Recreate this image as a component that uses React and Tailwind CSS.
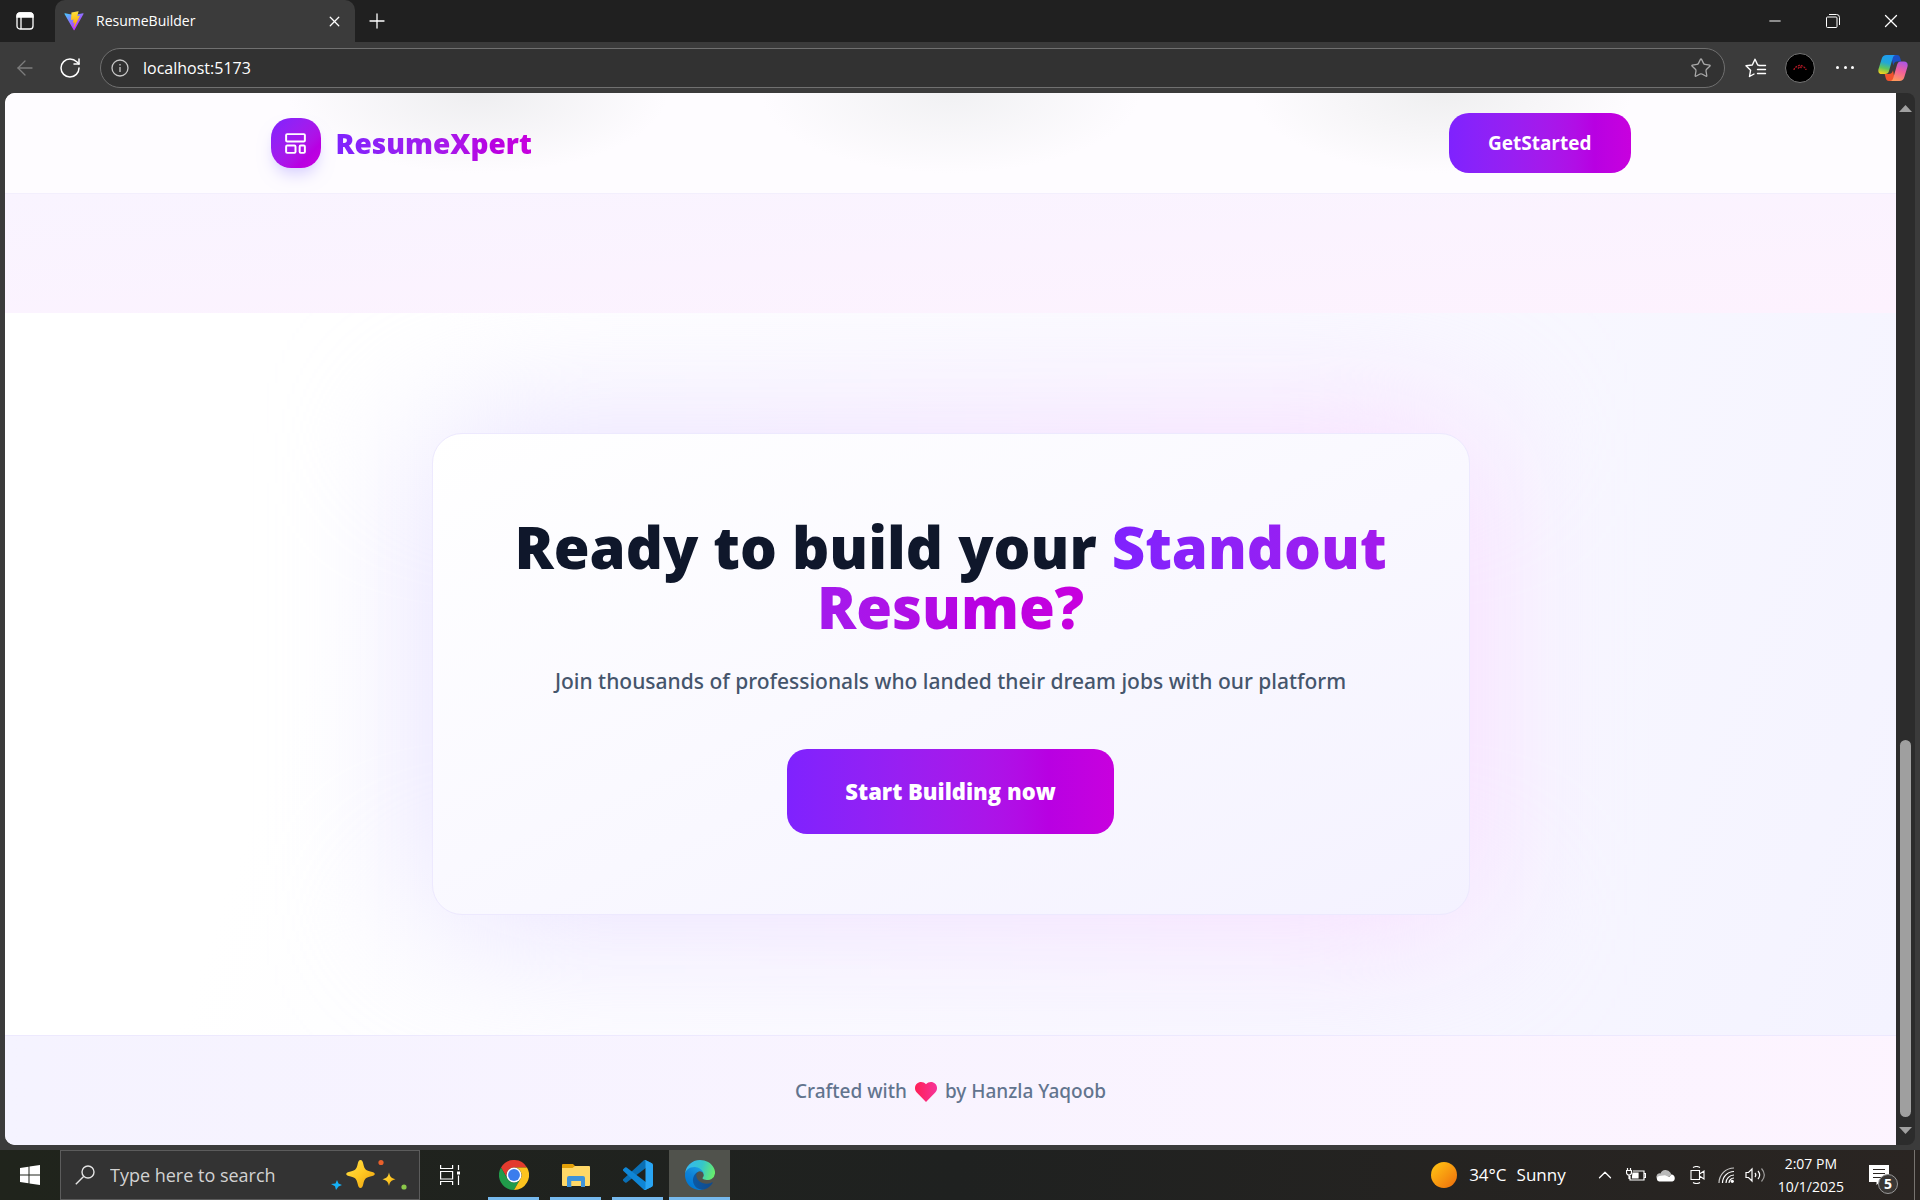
import {
  ArrowLeft, LayoutTemplate, Minus, Plus, RotateCw, Star, X, ChevronUp,
} from "lucide-react";

const brandGradient =
  "bg-linear-to-r from-[#7f22fe] via-[#b800e2] via-80% to-[#c800de]";

function ViteLogo() {
  return (
    <svg viewBox="0 0 410 404" className="size-5 shrink-0" aria-hidden="true">
      <defs>
        <linearGradient id="vite-a" x1="6" y1="33" x2="235" y2="344" gradientUnits="userSpaceOnUse">
          <stop stopColor="#41d1ff" /><stop offset="1" stopColor="#bd34fe" />
        </linearGradient>
        <linearGradient id="vite-b" x1="194" y1="9" x2="236" y2="293" gradientUnits="userSpaceOnUse">
          <stop stopColor="#ffea83" /><stop offset=".08" stopColor="#ffdd35" /><stop offset="1" stopColor="#ffa800" />
        </linearGradient>
      </defs>
      <path fill="url(#vite-a)" d="M399.6 59.5 215.6 388.5c-3.8 6.8-13.5 6.9-17.4.1L10.6 59.6c-4.2-7.4 2.1-16.3 10.4-14.8l184.2 32.9c1.2.2 2.4.2 3.6 0l180.3-32.9c8.3-1.5 14.7 7.3 10.5 14.7Z" />
      <path fill="url(#vite-b)" d="M293 1.6 156.8 28.3c-2.2.4-3.9 2.3-4 4.6l-8.4 141.4c-.2 3.4 2.9 6 6.1 5.2l37.9-8.7c3.6-.9 6.8 2.3 6 5.8l-11.2 55.2c-.8 3.7 2.7 6.9 6.3 5.8l23.4-7.2c3.7-1.1 7.1 2.1 6.4 5.8l-17.9 86.7c-1.1 5.4 6.1 8.3 9.1 3.7l2-3.1L323.5 102c1.8-3.7-1.4-7.9-5.5-7.1l-39 7.5c-3.7.7-6.8-2.7-5.7-6.3l25.4-88.2c1.1-3.6-2-7-5.7-6.3Z" />
    </svg>
  );
}

function CopilotLogo() {
  return (
    <svg viewBox="0 0 30 28" className="h-7 w-[30px]" aria-hidden="true">
      <defs>
        <linearGradient id="cp-a" x1="10" y1="1" x2="5" y2="20" gradientUnits="userSpaceOnUse">
          <stop stopColor="#1f9bf0" /><stop offset=".4" stopColor="#21a7d8" /><stop offset=".7" stopColor="#5fc65c" /><stop offset="1" stopColor="#f4d21c" />
        </linearGradient>
        <linearGradient id="cp-b" x1="25" y1="7" x2="18" y2="27" gradientUnits="userSpaceOnUse">
          <stop stopColor="#a855e8" /><stop offset=".5" stopColor="#f2609a" /><stop offset="1" stopColor="#ff9a5c" />
        </linearGradient>
      </defs>
      <path fill="#1b4fc4" d="M13 1h6c2 0 2.6 1 3.2 3l1 3.5h-4c-2.2 0-3.2 1.2-4 4Z" />
      <path fill="#f0532d" d="M17 27h-6c-2 0-2.7-1-3.3-3l-1-4h4c2.2 0 3.5-1 4.3-3.8Z" />
      <path fill="url(#cp-a)" d="M8.5 1H18c-2 0-2.8 1.5-3.4 3.5L11 17c-.7 2.2-1.8 3-4 3H4c-3 0-4.3-2-3.4-5.2L3.8 4.5C4.5 2.2 6 1 8.5 1Z" />
      <path fill="url(#cp-b)" d="M21.5 27H12c2 0 2.8-1.5 3.4-3.5L19 11c.7-2.4 1.8-3.5 4-3.5h3c3 0 4.3 2.2 3.4 5.4l-3.2 10.6c-.7 2.3-2.2 3.5-4.7 3.5Z" />
    </svg>
  );
}

function TitleBar() {
  return (
    <header className="flex h-[42px] bg-[#202020] text-white">
      <div className="flex w-[55px] items-center pl-4">
        <button aria-label="Tab actions">
          <svg viewBox="0 0 18 18" className="size-[18px]" fill="none" stroke="currentColor" strokeWidth="1.3" aria-hidden="true">
            <rect x="1" y="1" width="16" height="16" rx="3" />
            <path fill="currentColor" d="M1 5V4a3 3 0 0 1 3-3h10a3 3 0 0 1 3 3v1Z" />
            <path d="M5 5v12" />
          </svg>
        </button>
      </div>
      <div className="flex w-[300px] items-center rounded-t-[10px] bg-[#3b3b3b] pr-3 pl-[9px]">
        <ViteLogo />
        <span className="ml-3 flex-1 text-sm">ResumeBuilder</span>
        <button aria-label="Close tab"><X className="size-[17px]" strokeWidth={1.8} /></button>
      </div>
      <button className="ml-[10px]" aria-label="New tab"><Plus className="size-6" strokeWidth={1.3} /></button>
      <div className="ml-auto flex items-center text-white">
        <button className="flex w-[58px] justify-center" aria-label="Minimize"><Minus className="size-[18px]" strokeWidth={1.3} /></button>
        <button className="flex w-[58px] justify-center" aria-label="Restore">
          <svg viewBox="0 0 14 14" className="size-[14px]" fill="none" stroke="currentColor" aria-hidden="true">
            <rect x=".5" y="3" width="10.5" height="10.5" rx="1" /><path d="M3 .5h7.5a3 3 0 0 1 3 3V11" />
          </svg>
        </button>
        <button className="flex w-[58px] justify-center" aria-label="Close"><X className="size-[22px]" strokeWidth={1.4} /></button>
      </div>
    </header>
  );
}

function Toolbar() {
  return (
    <div className="flex h-[51px] items-center bg-[#3b3b3b] pr-3 pl-[13px] text-white">
      <button className="text-[#7d7d7d]" aria-label="Back"><ArrowLeft className="size-6" strokeWidth={1.3} /></button>
      <button className="ml-[21px]" aria-label="Refresh"><RotateCw className="size-6" strokeWidth={1.5} /></button>
      <label className="ml-[18px] flex h-10 flex-1 items-center rounded-full border border-[#707070] bg-[#323232] px-[10px]">
        <svg viewBox="0 0 18 18" className="size-[18px]" fill="none" stroke="#c8c8c8" strokeWidth="1.3" aria-hidden="true">
          <circle cx="9" cy="9" r="8" /><path d="M9 8v5M9 5v1.5" />
        </svg>
        <input className="ml-[14px] flex-1 bg-transparent text-base outline-none" defaultValue="localhost:5173" aria-label="Address" />
        <Star className="mr-[2px] size-[22px] text-[#a8a8a8]" strokeWidth={1.4} />
      </label>
      <button className="ml-5" aria-label="Favorites">
        <svg viewBox="0 0 22 20" className="h-5 w-[22px]" fill="none" stroke="currentColor" strokeWidth="1.4" strokeLinejoin="round" strokeLinecap="round" aria-hidden="true">
          <path d="M14 7.2 12.7 7 10 1.2 7.3 7 1 7.8l4.6 4.4L4.5 18.5 9 16M14 7.500h6.500M12.500 11.500h8M12.500 15.500h8" />
        </svg>
      </button>
      <button className="ml-[18px] flex size-[30px] items-center justify-center rounded-full border border-[#777] bg-black" aria-label="Profile">
        <svg viewBox="0 0 14 7" className="h-[7px] w-[14px]" fill="none" stroke="#b01824" strokeWidth="1.3" strokeDasharray="2 1" aria-hidden="true">
          <path d="M1 6c0-2 3-4 6-5 3 1 6 3 6 5M5 4.500l2-2 2 2" />
        </svg>
      </button>
      <button className="ml-[21px] flex w-[18px] justify-between" aria-label="Settings and more">
        <i className="size-[3px] rounded-full bg-white" /><i className="size-[3px] rounded-full bg-white" /><i className="size-[3px] rounded-full bg-white" />
      </button>
      <button className="ml-6" aria-label="Copilot"><CopilotLogo /></button>
    </div>
  );
}

function Page() {
  return (
    <div className="flex flex-1 flex-col overflow-hidden rounded-l-[10px] bg-white">
      <header className="border-b border-[#f3effd] bg-[#fefcff] bg-[radial-gradient(190px_80px_at_25%_0,#eeeef0,transparent),radial-gradient(190px_80px_at_50%_0,#f1f1f3,transparent),radial-gradient(190px_80px_at_76%_0,#efeff0,transparent)] bg-no-repeat px-6">
        <div className="mx-auto flex h-[100px] max-w-[1360px] items-center justify-between">
          <a href="#home" className="flex items-center gap-[15px]">
            <span className="flex size-[50px] items-center justify-center rounded-[20px] bg-linear-to-br from-[#7f22fe] via-[#b800e2] via-75% to-[#c800de] text-white shadow-lg shadow-violet-200">
              <LayoutTemplate className="size-[25px]" strokeWidth={1.9} />
            </span>
            <span className={`${brandGradient} bg-clip-text text-[28px] leading-10 font-black text-transparent`}>ResumeXpert</span>
          </a>
          <button className={`${brandGradient} rounded-[20px] px-[39px] py-4 text-[19px] leading-7 font-bold text-white`}>GetStarted</button>
        </div>
      </header>
      <div className="h-[119px] bg-linear-to-br from-[#f9f4ff] to-[#fdf2fe]" />
      <section className="isolate flex flex-1 items-center justify-center overflow-hidden bg-linear-110 from-white from-20% to-[#f4f3ff] px-6 py-[120px]">
        <div className="relative w-full max-w-[1038px]">
          <div className="absolute inset-0 -z-10 bg-linear-to-r from-[#e4e0ff] to-[#fad8ff] blur-[75px]" />
          <div className="rounded-[30px] border border-[#ede9fe] bg-linear-to-br from-white to-[#f4f2ff] px-20 pt-[83px] pb-20 text-center">
            <h1 className="text-[58px] leading-[60px] font-black text-[#0f172b]">
              Ready to build your <span className={`${brandGradient} bg-clip-text text-transparent`}>Standout Resume?</span>
            </h1>
            <p className="mt-[27px] font-['Noto_Sans',sans-serif] text-[21px] leading-[35px] font-medium text-[#45556c]">
              Join thousands of professionals who landed their dream jobs with our platform
            </p>
            <button className={`${brandGradient} mt-[50px] rounded-[20px] px-[58px] py-[25px] text-[22px] leading-[35px] font-black text-white`}>Start Building now</button>
          </div>
        </div>
      </section>
      <footer className="flex h-[110px] items-center justify-center gap-2 border-t border-[#ede9fe] bg-linear-to-r from-violet-50 to-fuchsia-50 pt-[2px] font-['Noto_Sans',sans-serif] text-[19px] font-medium text-[#62748e]">
        <span>Crafted with</span>
        <svg viewBox="0 0 22 20" className="h-5 w-[22px]" role="img" aria-label="love">
          <defs><linearGradient id="heart"><stop stopColor="#ff2056" /><stop offset="1" stopColor="#f6339a" /></linearGradient></defs>
          <path fill="url(#heart)" d="M11 20 2 10.8C-.7 8-.6 4 1.8 1.8 4.4-.6 8.4-.5 11 2.3 13.6-.5 17.6-.6 20.2 1.8 22.6 4 22.7 8 20 10.8Z" />
        </svg>
        <span>by Hanzla Yaqoob</span>
      </footer>
    </div>
  );
}

function Scrollbar() {
  return (
    <div className="flex w-[19px] flex-col items-center rounded-r-lg bg-[#2c2c2c] pt-3 pb-[11px]" aria-hidden="true">
      <svg viewBox="0 0 13 7" className="h-[7px] w-[13px]"><path fill="#a0a0a0" d="M6.5 0 13 7H0Z" /></svg>
      <div className="grow-[5]" />
      <div className="w-[11px] grow-[3] rounded-full bg-[#9f9f9f]" />
      <svg viewBox="0 0 13 7" className="mt-[10px] h-[7px] w-[13px]"><path fill="#a0a0a0" d="M6.5 7 13 0H0Z" /></svg>
    </div>
  );
}

function Sparkles() {
  return (
    <svg viewBox="0 0 78 32" className="h-8 w-[78px]" aria-hidden="true">
      <defs><linearGradient id="spark" x1="0" y1="0" x2="1" y2="1"><stop stopColor="#ffe14a" /><stop offset=".5" stopColor="#ffc822" /><stop offset="1" stopColor="#e89b10" /></linearGradient></defs>
      <path fill="url(#spark)" d="M29.5 1c1.5 0 2.2 1.2 2.8 4 1.2 5 2.2 6.500 7 7.500 3 .6 4.500 1.200 4.500 2.500s-1.500 2-4.500 2.600c-4.800 1-5.800 2.500-7 7.500-.6 2.700-1.300 4-2.800 4s-2.200-1.300-2.800-4c-1.200-5-2.200-6.500-7-7.500-3-.6-4.500-1.300-4.500-2.600s1.500-1.900 4.500-2.500c4.800-1 5.800-2.500 7-7.500.6-2.800 1.300-4 2.800-4Z" />
      <path fill="url(#spark)" d="M58 13.5c1 4.500 2 5.500 6.500 6.700-4.500 1.200-5.500 2.300-6.500 6.800-1-4.500-2-5.600-6.500-6.800 4.500-1.200 5.500-2.200 6.500-6.700Z" />
      <path fill="#16b0f5" d="m6 21 1.500 3.600L11 26l-3.500 1.500L5 31l-1-3.800L0 25l4.500-.6Z" />
      <circle cx="50" cy="3.500" r="2.600" fill="#e9602b" /><circle cx="73" cy="28" r="2.600" fill="#8bc84a" />
    </svg>
  );
}

function ChromeLogo() {
  return (
    <svg viewBox="0 0 48 48" className="size-[30px]" aria-hidden="true">
      <path fill="#e33b2e" d="M24 12h20.8A24 24 0 0 0 3.2 12l10.4 18A12 12 0 0 1 24 12Z" />
      <path fill="#219b4a" d="M3.2 12A24 24 0 0 0 24 48l10.4-18a12 12 0 0 1-20.8 0Z" />
      <path fill="#fcc31e" d="M44.8 12H24a12 12 0 0 1 10.4 18L24 48a24 24 0 0 0 20.8-36Z" />
      <circle cx="24" cy="24" r="12" fill="#fff" /><circle cx="24" cy="24" r="9.5" fill="#3b7ded" />
    </svg>
  );
}

function ExplorerLogo() {
  return (
    <svg viewBox="0 0 28 24" className="h-6 w-7" aria-hidden="true">
      <path fill="#e3a008" d="M0 2a1 1 0 0 1 1-1h10l2.500 2.500L11 7H0Z" />
      <path fill="#ffd867" d="M0 5h10.5l2.500-2h14a1 1 0 0 1 1 1v18a1 1 0 0 1-1 1H1a1 1 0 0 1-1-1Z" />
      <path fill="#3f93d9" d="M5 24V15a2 2 0 0 1 2-2h14a2 2 0 0 1 2 2v9h-4v-6H9.500v6Z" />
      <path fill="#ffd867" d="M9.5 18H19v5H9.500Z" />
    </svg>
  );
}

function CodeLogo() {
  return (
    <svg viewBox="0 0 100 100" className="size-[30px]" aria-hidden="true">
      <path fill="#0a6fb5" d="M96.46 10.8 75.86.87a6.23 6.23 0 0 0-7.1 1.2L1.3 63.6a4.16 4.16 0 0 0 0 6.15l5.5 5a4.16 4.16 0 0 0 5.32.24L93.4 13.37c2.72-2.07 6.6-.12 6.6 3.3v-.24a6.25 6.25 0 0 0-3.54-5.63Z" />
      <path fill="#0f86d6" d="m96.46 89.2-20.6 9.92a6.23 6.23 0 0 1-7.1-1.2L1.3 36.4a4.16 4.16 0 0 1 0-6.15l5.5-5a4.16 4.16 0 0 1 5.32-.24L93.4 86.63c2.72 2.07 6.6.13 6.6-3.3v.25a6.25 6.25 0 0 1-3.54 5.62Z" />
      <path fill="#29a5f3" d="M75.86 99.13a6.23 6.23 0 0 1-7.1-1.2c2.3 2.3 6.24.67 6.24-2.58V4.65c0-3.26-3.94-4.89-6.25-2.58a6.23 6.23 0 0 1 7.1-1.21l20.6 9.9A6.25 6.25 0 0 1 100 16.4v67.17a6.25 6.25 0 0 1-3.54 5.63Z" />
    </svg>
  );
}

function EdgeLogo() {
  return (
    <svg viewBox="0 0 256 256" className="size-[30px]" aria-hidden="true">
      <defs>
        <linearGradient id="edge-a" x1="60" y1="177" x2="240" y2="177" gradientUnits="userSpaceOnUse"><stop stopColor="#0c59a4" /><stop offset="1" stopColor="#114a8b" /></linearGradient>
        <linearGradient id="edge-b" x1="140" y1="80" x2="40" y2="220" gradientUnits="userSpaceOnUse"><stop stopColor="#1b9de2" /><stop offset=".5" stopColor="#0f83d8" /><stop offset="1" stopColor="#0078d4" /></linearGradient>
        <linearGradient id="edge-c" x1="20" y1="60" x2="240" y2="130" gradientUnits="userSpaceOnUse"><stop stopColor="#35b8ee" /><stop offset=".5" stopColor="#36c6c9" /><stop offset="1" stopColor="#66eb6e" /></linearGradient>
      </defs>
      <path fill="url(#edge-a)" d="M231 190.5c-3.4 1.8-6.9 3.4-10.5 4.7a101.8 101.8 0 0 1-35.9 6.5c-47.3 0-88.5-32.5-88.5-74.3a31.5 31.5 0 0 1 16.4-27.3c-42.8 1.8-53.8 46.4-53.8 72.5 0 74 68.1 81.4 82.8 81.4 7.9 0 19.8-2.3 27-4.6l1.3-.4a128.3 128.3 0 0 0 66.6-52.8 4 4 0 0 0-5.4-5.7Z" />
      <path fill="url(#edge-b)" d="M105.7 241.4a79.2 79.2 0 0 1-22.7-21.3 80.7 80.7 0 0 1 29.5-120c3.2-1.5 8.5-4.1 15.6-4a32.4 32.4 0 0 1 25.7 13 31.9 31.9 0 0 1 6.3 18.7c0-.2 24.5-79.6-80-79.6-43.9 0-80 41.7-80 78.2-.2 19.3 4 38.5 12.1 56a128 128 0 0 0 156.4 67.1 75.5 75.5 0 0 1-62.9-8.1Z" />
      <path fill="url(#edge-c)" d="M152.3 148.9c-.8 1-3.3 2.5-3.3 5.7 0 2.6 1.7 5.2 4.8 7.3 14.4 10 41.7 8.7 41.8 8.7a59.6 59.6 0 0 0 30.3-8.4 61.4 61.4 0 0 0 30.4-52.9c.3-22.4-8-37.3-11.3-43.9C223.6 23.9 177.7 0 128 0A128 128 0 0 0 0 126.2c.5-36.5 36.8-66 80-66 3.5 0 23.5.3 42 10.1a72.5 72.5 0 0 1 30.9 29.3c6.1 10.6 7.2 24.1 7.2 29.5s-2.7 13.3-7.8 19.8Z" />
    </svg>
  );
}

const apps = [
  { name: "Chrome", Logo: ChromeLogo },
  { name: "File Explorer", Logo: ExplorerLogo },
  { name: "Code", Logo: CodeLogo },
];

function Taskbar() {
  return (
    <footer className="flex h-[50px] bg-linear-to-r from-[#20241c] via-[#1f2120] to-[#2a2522] text-white">
      <button className="flex w-[60px] items-center justify-center" aria-label="Start">
        <svg viewBox="0 0 20 20" className="size-5" fill="currentColor" aria-hidden="true">
          <path d="M0 3 8.5 1.8v7.700H0ZM9.500 1.600 20 0v9.500H9.500ZM0 10.500h8.500v7.700L0 17ZM9.500 10.500H20V20L9.500 18.400Z" />
        </svg>
      </button>
      <label className="flex w-[360px] items-center border border-[#5c5c5c] bg-[#333] pr-[10px] pl-[14px]">
        <svg viewBox="0 0 20 20" className="size-5" fill="none" stroke="#e4e4e4" strokeWidth="1.4" aria-hidden="true">
          <circle cx="13" cy="7" r="6" /><path d="M8.6 11.4.8 19.2" />
        </svg>
        <input className="ml-[15px] w-0 flex-1 bg-transparent text-lg placeholder-[#d2d2d2] outline-none" placeholder="Type here to search" aria-label="Search" />
        <Sparkles />
      </label>
      <button className="flex w-[60px] items-center justify-center" aria-label="Task view">
        <svg viewBox="0 0 20 20" className="size-5" fill="none" stroke="currentColor" strokeWidth="1.2" aria-hidden="true">
          <path d="M.6 0v3.500h12V0M.6 20v-3.500h12V20M.6 6.500h12v7.500H.6ZM18.500 0v5M18.500 10.500V20" /><path fill="currentColor" stroke="none" d="M17 6.500h3v3h-3Z" />
        </svg>
      </button>
      <div className="flex gap-[11px] pr-[6px] pl-2">
        {apps.map(({ name, Logo }) => (
          <button key={name} className="flex w-[51px] items-center justify-center border-b-[3px] border-[#76b9ed] pt-[3px]" aria-label={name}><Logo /></button>
        ))}
      </div>
      <button className="flex w-[61px] items-center justify-center border-b-[3px] border-[#76b9ed] bg-[#50524c] pt-[3px]" aria-label="Edge"><EdgeLogo /></button>

      <div className="ml-auto flex items-center">
        <button className="flex items-center text-[17px]">
          <span className="mr-3 size-[26px] rounded-full bg-linear-to-br from-[#ffc814] to-[#ec6a0c]" />
          <span className="mr-[10px]">34°C</span><span>Sunny</span>
        </button>
        <button className="ml-7" aria-label="Show hidden icons"><ChevronUp className="h-6 w-[22px]" strokeWidth={1.4} /></button>
        <svg viewBox="0 0 20 14" className="ml-[10px] h-[14px] w-5" fill="none" stroke="currentColor" strokeWidth="1.2" aria-hidden="true">
          <path d="M7 3h11v9H4V8M18.500 5.500h1v4h-1M1.500 0v2M4.500 0v2M.5 2.500h5v2a2 2 0 0 1-5 0ZM3 6.500V11" /><path fill="currentColor" d="M7 5h5v5H6.500Z" />
        </svg>
        <svg viewBox="0 0 20 13" className="ml-[10px] h-[13px] w-5" aria-hidden="true">
          <path fill="#b9b9b9" d="M4.5 4.500a5.500 5.500 0 0 1 9.800-1l1.200 2.300L8 11H3a3.300 3.300 0 0 1 1.500-6.500Z" /><path fill="#fff" d="M3 12.500a2.800 2.800 0 0 1 .2-5.500L9 6.200 13 8l2.500-2.500A3.600 3.600 0 0 1 16.300 12.500Z" />
        </svg>
        <svg viewBox="0 0 15 18" className="ml-[14px] h-[18px] w-[15px]" fill="none" stroke="currentColor" strokeWidth="1.1" aria-hidden="true">
          <path d="M1 4.500h8.500v9H1ZM9.500 8l4.500-3v8l-4.500-3M3 1.500c2-1.200 5-1.200 7 0M3 16.500c2 1.200 5 1.200 7 0" />
        </svg>
        <svg viewBox="0 0 16 16" className="ml-[13px] size-4" fill="none" stroke="currentColor" strokeWidth="1.2" aria-hidden="true">
          <path d="M1 16A15 15 0 0 1 16 1" opacity=".75" /><path d="M4.500 16A11.500 11.500 0 0 1 16 4.500M8 16a8 8 0 0 1 8-8M11 16a5 5 0 0 1 5-5" /><circle cx="14.3" cy="14.3" r="1.6" fill="currentColor" stroke="none" />
        </svg>
        <svg viewBox="0 0 21 16" className="ml-[11px] h-4 w-[21px]" fill="none" stroke="currentColor" strokeWidth="1.2" aria-hidden="true">
          <path d="M1 5.500h2.500L7 2v12l-3.500-3.500H1ZM10 6c1 1.200 1 2.800 0 4M13 4c2 2.400 2 5.600 0 8" /><path d="M16.500 1.500c3.500 4 3.500 9 0 13" opacity=".55" />
        </svg>
        <div className="ml-3 flex flex-col items-center text-sm leading-[23px]"><span>2:07 PM</span><span>10/1/2025</span></div>
        <button className="relative ml-[25px]" aria-label="Notifications, 5 new">
          <svg viewBox="0 0 20 20" className="size-5" aria-hidden="true">
            <path fill="#fff" d="M0 0h20v17h-9l-3.500 3v-3H0Z" /><path stroke="#2a2522" strokeWidth="1.2" d="M4 4.500h12M4 8.500h12M4 12.500h8" />
          </svg>
          <span className="absolute top-[9px] left-[9px] flex size-5 items-center justify-center rounded-full border border-[#999] bg-[#3a3735] text-sm leading-none font-bold">5</span>
        </button>
        <div className="mr-[5px] ml-[25px] h-[50px] w-px bg-[#77736f]" />
      </div>
    </footer>
  );
}

export default function App() {
  return (
    <div className="flex min-h-screen flex-col bg-[#3b3b3b] font-['Open_Sans','Noto_Sans',sans-serif]">
      <TitleBar />
      <Toolbar />
      <main className="flex flex-1 pr-[5px] pb-[5px] pl-[5px]">
        <Page />
        <Scrollbar />
      </main>
      <Taskbar />
    </div>
  );
}
